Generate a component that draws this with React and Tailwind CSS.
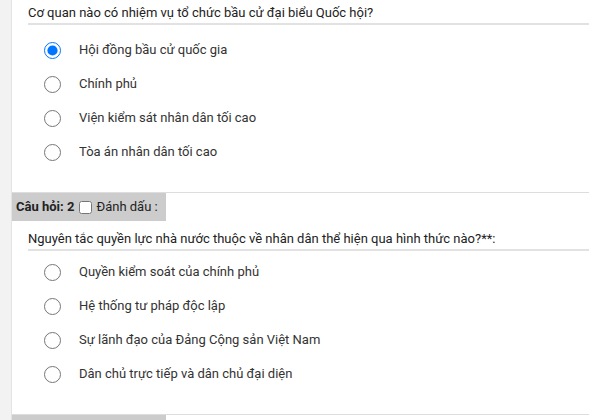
const questions = [
  {
    text: 'Cơ quan nào có nhiệm vụ tổ chức bầu cử đại biểu Quốc hội?',
    options: [
      'Hội đồng bầu cử quốc gia',
      'Chính phủ',
      'Viện kiểm sát nhân dân tối cao',
      'Tòa án nhân dân tối cao',
    ],
    selected: 0,
  },
  {
    number: 2,
    text: 'Nguyên tắc quyền lực nhà nước thuộc về nhân dân thể hiện qua hình thức nào?**:',
    options: [
      'Quyền kiểm soát của chính phủ',
      'Hệ thống tư pháp độc lập',
      'Sự lãnh đạo của Đảng Cộng sản Việt Nam',
      'Dân chủ trực tiếp và dân chủ đại diện',
    ],
    selected: -1,
  },
];

function QuestionHeader({ number }) {
  return (
    <div className="border-t border-[#dddddd]">
      <div className="flex h-[28px] w-[154px] items-center bg-[#cccccc] pl-[4px] text-[13px] text-[#222]">
        <span className="font-bold">Câu hỏi: {number}</span>
        <input type="checkbox" readOnly className="ml-[5px] mr-[4px] h-[13px] w-[13px]" />
        <span>Đánh dấu :</span>
      </div>
    </div>
  );
}

function Question({ q, idx }) {
  const first = !q.number;
  return (
    <div className="pb-[30px]">
      <div className={`pl-[16px] ${first ? 'pt-[5px]' : 'pt-[10px]'}`}>
        <div className="border-b-2 border-[#e2e2e2] pb-[2px] leading-[16px] text-[#222]">{q.text}</div>
      </div>
      <div className={`flex flex-col gap-[14px] pl-[32px] ${first ? 'pt-[15px]' : 'pt-[11px]'}`}>
        {q.options.map((opt, i) => (
          <label key={i} className="flex h-[20px] items-center">
            <input
              type="radio"
              name={`q${idx}`}
              defaultChecked={i === q.selected}
              className="m-0 h-[17px] w-[17px]"
            />
            <span className="ml-[18px] text-[#333]">{opt}</span>
          </label>
        ))}
      </div>
    </div>
  );
}

export default function App() {
  return (
    <div className="flex h-[420px] w-[589px] overflow-hidden bg-white font-['Roboto',sans-serif] text-[13px]">
      <div className="w-[12px] shrink-0 border-r border-[#e3e3e3] bg-[#f2f2f2]" />
      <div className="flex-1">
        {questions.map((q, i) => (
          <div key={i}>
            {q.number && <QuestionHeader number={q.number} />}
            <Question q={q} idx={i} />
          </div>
        ))}
        <div className="border-t border-[#dddddd]">
          <div className="h-[28px] w-[154px] bg-[#cccccc]" />
        </div>
      </div>
    </div>
  );
}
